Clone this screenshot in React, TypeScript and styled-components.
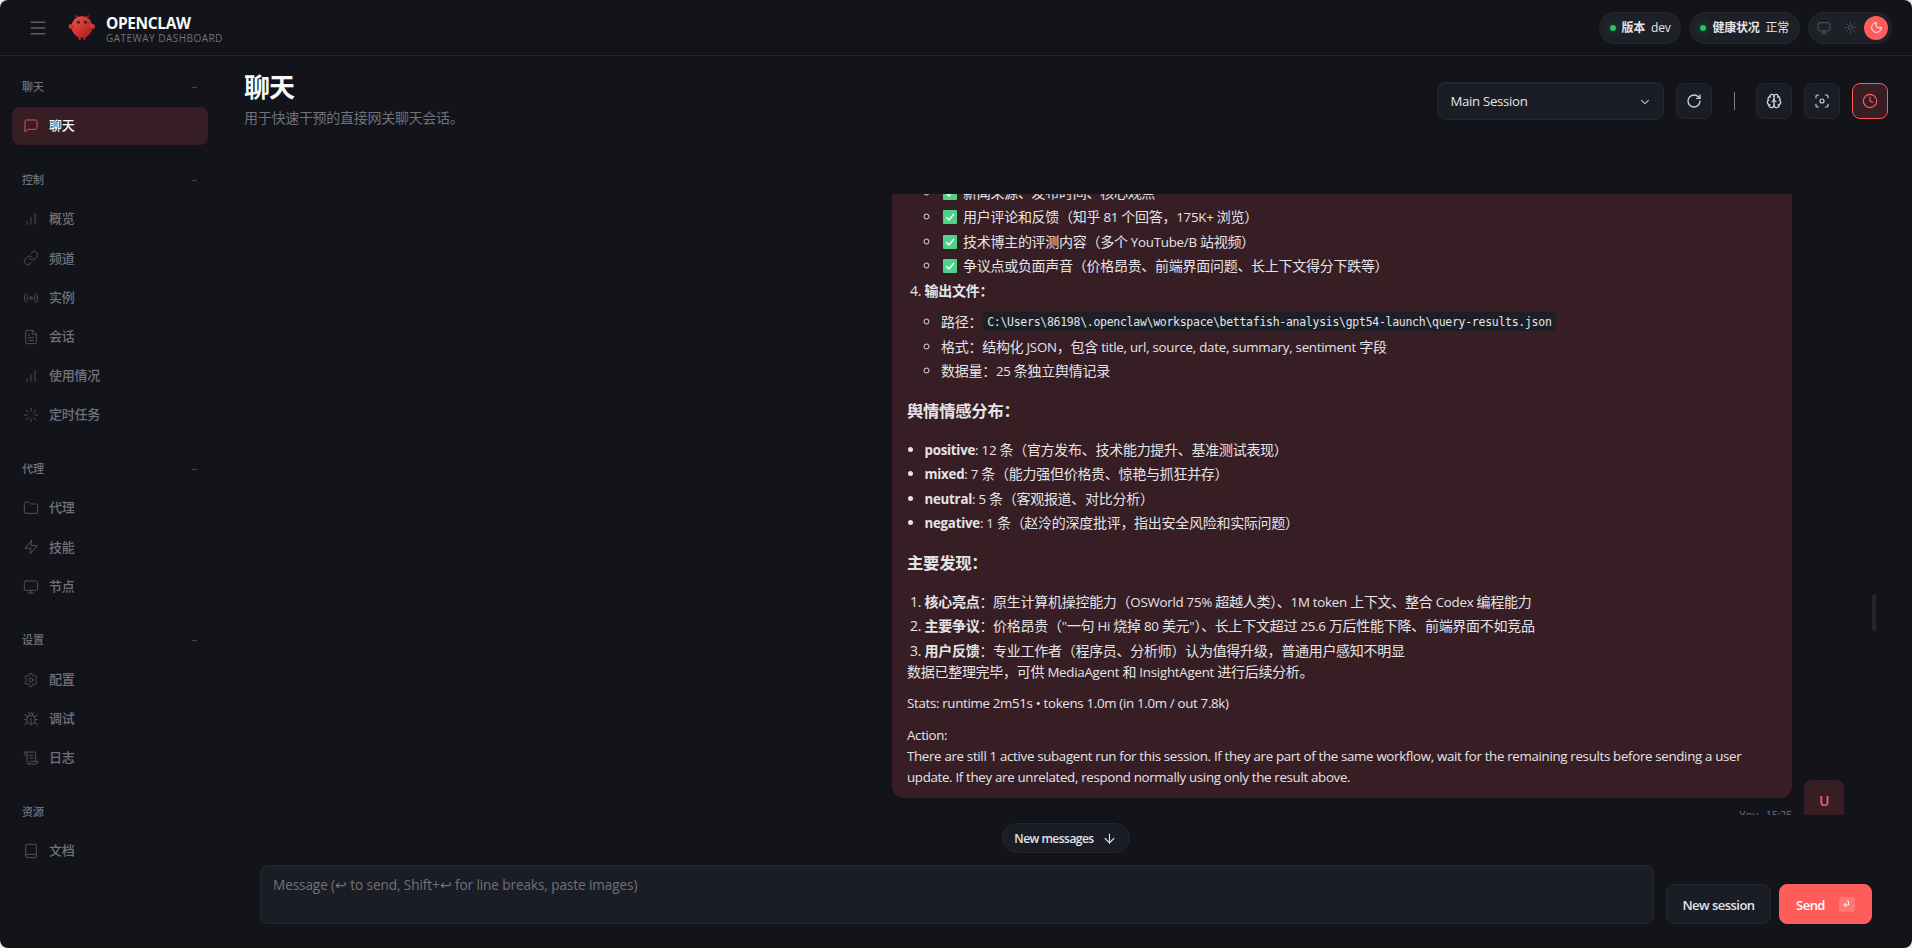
import React, { Fragment } from "react";
import styled, { createGlobalStyle, css } from "styled-components";
import {
  ArrowDown, Book, Brain, Bug, ChevronDown, Clock, FileText, Focus, Folder, Link,
  Loader, Menu, Monitor, Moon, Radio, RotateCw, ScrollText, Settings, Sun,
} from "lucide-react";

const Global = createGlobalStyle`
  * { box-sizing: border-box; }
  html, body { margin: 0; padding: 0; background: #e9eaec; }
  body {
    font: 400 14px/1.5 "Open Sans", "Noto Sans CJK SC", sans-serif;
    letter-spacing: -0.02em;
    color: #e4e4e7;
    overflow: hidden;
  }
  button { font: inherit; letter-spacing: inherit; color: inherit; padding: 0; margin: 0; }
`;

const Shell = styled.div`
  height: 948px;
  display: grid;
  grid-template: 56px 1fr / 220px 1fr;
  background: #12141a;
  border-radius: 8px;
  overflow: hidden;
`;

const Topbar = styled.header`
  grid-column: 1 / -1;
  display: flex;
  align-items: center;
  justify-content: space-between;
  padding: 0 20px;
  border-bottom: 1px solid #27272a;
`;
const Cluster = styled.div<{ $gap: number }>`
  display: flex;
  align-items: center;
  gap: ${(p) => p.$gap}px;
`;
const MenuButton = styled.button`
  width: 36px;
  height: 36px;
  display: grid;
  place-items: center;
  border: 0;
  background: none;
  color: #5f5f68;
`;
const Brand = styled.div`
  display: flex;
  flex-direction: column;
  gap: 1px;
  padding-top: 2px;
`;
const BrandName = styled.span`
  font-size: 15.5px;
  line-height: 17px;
  font-weight: 700;
  letter-spacing: -0.38px;
  color: #fafafa;
`;
const BrandSub = styled.span`
  font-size: 10px;
  line-height: 10px;
  font-weight: 500;
  letter-spacing: 0.47px;
  color: #71717a;
`;
const Pill = styled.div`
  height: 32px;
  display: flex;
  align-items: center;
  gap: 6px;
  padding: 0 10px;
  border: 1px solid #27272a;
  border-radius: 16px;
  background: #1e2028;
  font-size: 12px;
  letter-spacing: -0.24px;
`;
const Dot = styled.i`
  width: 6px;
  height: 6px;
  border-radius: 50%;
  background: #22c55e;
  box-shadow: 0 0 8px rgba(34, 197, 94, 0.5);
`;
const ThemeToggle = styled(Pill)`
  padding: 0 3px;
  gap: 2px;
`;
const ThemeOption = styled.span<{ $active?: boolean }>`
  width: 24px;
  height: 24px;
  display: grid;
  place-items: center;
  border-radius: 50%;
  color: ${(p) => (p.$active ? "#fff" : "#55555e")};
  background: ${(p) => (p.$active ? "#ff5c5c" : "none")};
`;

const Sidebar = styled.nav`
  display: flex;
  flex-direction: column;
  gap: 18.9px;
  padding: 15px 12px;
`;
const Group = styled.section`
  display: flex;
  flex-direction: column;
  gap: 1.05px;
`;
const GroupLabel = styled.div`
  height: 32px;
  margin-bottom: 3px;
  padding: 0 10px;
  display: flex;
  align-items: center;
  justify-content: space-between;
  font-size: 11px;
  font-weight: 500;
  color: #71717a;
  letter-spacing: 0;
`;
const Dash = styled.i`
  width: 5px;
  height: 1px;
  margin-right: 1px;
  background: #45464d;
`;
const Item = styled.a<{ $active?: boolean }>`
  height: 38.15px;
  display: flex;
  align-items: center;
  gap: 10px;
  padding: 0 11px;
  border-radius: 8px;
  font-size: 13px;
  font-weight: 500;
  color: ${(p) => (p.$active ? "#fafafa" : "#71717a")};
  background: ${(p) => (p.$active ? "#361e24" : "none")};
  svg {
    color: ${(p) => (p.$active ? "#ff5c5c" : "#71717a")};
    opacity: ${(p) => (p.$active ? 0.85 : 0.65)};
  }
`;

const Main = styled.main`
  display: flex;
  flex-direction: column;
  min-width: 0;
  padding: 0 24px;
`;
const PageHead = styled.div`
  height: 138px;
  display: flex;
  justify-content: space-between;
`;
const Title = styled.h1`
  margin: 14px 0 0;
  font-size: 26px;
  line-height: 34px;
  font-weight: 700;
  letter-spacing: -0.9px;
  color: #fafafa;
`;
const Subtitle = styled.p`
  margin: 3px 0 0;
  color: #71717a;
`;
const Controls = styled.div`
  height: 38px;
  margin-top: 26px;
  display: flex;
  align-items: center;
  gap: 12px;
`;
const raised = css`
  border: 1px solid #27272a;
  background: #1a1d25;
`;
const Select = styled.div`
  ${raised}
  width: 227px;
  height: 38px;
  display: flex;
  align-items: center;
  justify-content: space-between;
  padding: 1px 11px 0 13px;
  border-radius: 8px;
  box-shadow: inset 0 1px 0 #23252b;
  font-size: 13.2px;
  letter-spacing: -0.3px;
  font-weight: 500;
`;
const IconButton = styled.button<{ $active?: boolean }>`
  ${raised}
  width: 36px;
  height: 36px;
  display: grid;
  place-items: center;
  border-radius: 8px;
  color: #d0d0d4;
  ${(p) => p.$active && css`
    color: #ff5c5c;
    border-color: #ff5c5c;
    background: #361e24;
  `}
`;
const Divider = styled.i`
  width: 1px;
  height: 18px;
  margin: 0 9.5px 0 10px;
  background: #7b7b83;
`;

const Thread = styled.div`
  height: 621px;
  overflow: hidden;
  display: flex;
  flex-direction: column;
  justify-content: flex-end;
  position: relative;
  margin-right: 12px;
`;
const Message = styled.div`
  display: flex;
  justify-content: flex-end;
  align-items: flex-end;
  gap: 12px;
  padding-right: 32px;
  margin-bottom: -5px;
`;
const MessageBody = styled.div`
  width: 900px;
`;
const Bubble = styled.article`
  height: 632px;
  display: flex;
  flex-direction: column;
  justify-content: flex-end;
  padding: 0 15px 10.4px;
  border-radius: 12px;
  background: #361e24;
  line-height: 21px;
  p { margin: 10.5px 0 0; }
  ul, ol { margin: 0; padding-left: 17.5px; }
  > ul, > ol { margin: -1px 0 1px; }
  > ol + p { margin: -1px 0 1px; }
  h3 { margin: 16.4px 0; font-size: 16.38px; line-height: 24.6px; font-weight: 700; }
  li + li { margin-top: 3.5px; }
  ol ul { margin-top: 10.7px; padding-left: 16.5px; }
`;
const Latin = styled.span`
  font-size: 13.3px;
  line-height: 0;
  letter-spacing: -0.25px;
`;
const Lines = styled.p`
  font-size: 13.3px;
  letter-spacing: -0.318px;
`;
const Check = styled.svg`
  width: 14px;
  height: 14px;
  margin: 0 6px 0 2px;
  vertical-align: -2px;
`;
const Code = styled.code`
  display: inline-block;
  height: 19px;
  padding: 0 4.5px;
  margin: 1px 0 0 0.5px;
  border-radius: 4px;
  background: #1c1f26;
  font: 11.5px/20px "DejaVu Sans Mono", monospace;
  letter-spacing: -0.284px;
  vertical-align: top;
`;
const Meta = styled.footer`
  height: 22px;
  display: flex;
  justify-content: flex-end;
  gap: 7px;
  padding-top: 9px;
  line-height: 16px;
  font-size: 11px;
  letter-spacing: -0.35px;
  color: #71717a;
  b { font-weight: 500; font-size: 11.5px; }
`;
const Avatar = styled.div`
  width: 40px;
  height: 40px;
  display: grid;
  place-items: center;
  border-radius: 8px;
  background: #361e24;
  color: #ff5c5c;
  font-size: 14px;
  font-weight: 600;
`;
const ScrollThumb = styled.i`
  position: absolute;
  right: 0;
  top: 400px;
  width: 4px;
  height: 37px;
  border-radius: 4px 0 0 4px;
  background: #27272a;
`;

const JumpRow = styled.div`
  height: 50px;
  display: flex;
  justify-content: center;
  align-items: flex-start;
  padding: 8px 0 0;
`;
const JumpButton = styled.button`
  ${raised}
  width: 128px;
  height: 30px;
  display: flex;
  align-items: center;
  justify-content: center;
  gap: 8px;
  padding: 1px 1px 0 0;
  border-radius: 15px;
  font-size: 12px;
  font-weight: 600;
  letter-spacing: -0.52px;
`;
const Composer = styled.form`
  display: flex;
  align-items: flex-end;
  padding: 0 16px;
`;
const Input = styled.div`
  ${raised}
  flex: 1;
  height: 59px;
  margin-right: 12px;
  padding: 8px 12px;
  border-radius: 8px;
  box-shadow: inset 0 1px 0 #23252b;
  color: #71717a;
  font-size: 13.6px;
  line-height: 21px;
  letter-spacing: -0.1px;
`;
const Action = styled.button<{ $primary?: boolean }>`
  ${raised}
  width: 105px;
  height: 40px;
  display: flex;
  align-items: center;
  justify-content: center;
  gap: 14px;
  padding-top: 3px;
  border-radius: 8px;
  font-size: 13px;
  font-weight: 600;
  letter-spacing: -0.52px;
  ${(p) => p.$primary && css`
    width: 93px;
    margin-left: 8px;
    border-color: #ff5c5c;
    background: #ff5c5c;
    color: #fff;
  `}
`;
const Key = styled.kbd`
  width: 16px;
  height: 15px;
  margin-bottom: 3px;
  display: grid;
  place-items: center;
  border-radius: 3px;
  background: rgba(255, 255, 255, 0.17);
`;

/* Latin runs inside Chinese copy use a slightly smaller face. */
const Mixed = ({ children }: { children: string }) => (
  <>
    {children.split(/([\x20-\x7e•]+)/).map((run, i) =>
      i % 2 ? <Latin key={i}>{run}</Latin> : <Fragment key={i}>{run}</Fragment>
    )}
  </>
);

const Logo = () => (
  <svg width="28" height="28" viewBox="0 0 120 120">
    <defs>
      <linearGradient id="claw" x1="0" y1="0" x2="1" y2="1">
        <stop offset="0" stopColor="#ff4d4d" />
        <stop offset="1" stopColor="#991b1b" />
      </linearGradient>
    </defs>
    <path fill="url(#claw)" d="M60 10C30 10 15 35 15 55s15 40 30 45v10h10v-10s5 2 10 0v10h10v-10c15-5 30-25 30-45S90 10 60 10Z" />
    <path fill="url(#claw)" d="M20 45C5 40 0 50 5 60s15 5 20-5 0-10-5-10Z" />
    <path fill="url(#claw)" d="M100 45c15-5 20 5 15 15s-15 5-20-5 0-10 5-10Z" />
    <path d="M45 15Q35 5 30 8M75 15Q85 5 90 8" stroke="#ff4d4d" strokeWidth="3" strokeLinecap="round" fill="none" />
    <circle cx="45" cy="35" r="6" fill="#050810" />
    <circle cx="75" cy="35" r="6" fill="#050810" />
    <circle cx="46" cy="34" r="2.5" fill="#00e5cc" />
    <circle cx="76" cy="34" r="2.5" fill="#00e5cc" />
  </svg>
);

type GlyphProps = { size?: number; strokeWidth?: number };
const glyph = (d: string) => ({ size = 16, strokeWidth = 1.5 }: GlyphProps) => (
  <svg width={size} height={size} viewBox="0 0 24 24" fill="none" stroke="currentColor"
    strokeWidth={strokeWidth} strokeLinecap="round" strokeLinejoin="round">
    <path d={d} />
  </svg>
);
const ChatIcon = glyph("M21 15a2 2 0 0 1-2 2H7l-4 4V5a2 2 0 0 1 2-2h14a2 2 0 0 1 2 2z");
const BarsIcon = glyph("M12 20V10M18 20V4M6 20v-4");
const BoltIcon = glyph("M13 2 3 14h9l-1 8 10-12h-9l1-8z");

const CheckMark = () => (
  <Check viewBox="0 0 14 14">
    <rect width="14" height="14" rx="1" fill="#4fd18b" />
    <path d="M3.2 7.3 6 10l5-6" fill="none" stroke="#fff" strokeWidth="1.4" />
  </Check>
);

const ReturnArrow = ({ size, width }: { size: number; width: number }) => (
  <svg width={size} height={size} viewBox="0 0 12 12" fill="none" stroke="currentColor" strokeWidth={width}>
    <path d="M6.5 1.5h2.2v5.2H3M5.2 4 2.5 6.7l2.7 2.7" />
  </svg>
);

const groups = [
  { label: "聊天", items: [["聊天", ChatIcon]] },
  {
    label: "控制",
    items: [
      ["概览", BarsIcon], ["频道", Link], ["实例", Radio], ["会话", FileText],
      ["使用情况", BarsIcon], ["定时任务", Loader],
    ],
  },
  { label: "代理", items: [["代理", Folder], ["技能", BoltIcon], ["节点", Monitor]] },
  { label: "设置", items: [["配置", Settings], ["调试", Bug], ["日志", ScrollText]] },
  { label: "资源", fixed: true, items: [["文档", Book]] },
] as { label: string; fixed?: boolean; items: [string, React.ElementType][] }[];

const checks = [
  "新闻来源、发布时间、核心观点",
  "用户评论和反馈（知乎 81 个回答，175K+ 浏览）",
  "技术博主的评测内容（多个 YouTube/B 站视频）",
  "争议点或负面声音（价格昂贵、前端界面问题、长上下文得分下跌等）",
];
const sentiments = [
  ["positive", ": 12 条（官方发布、技术能力提升、基准测试表现）"],
  ["mixed", ": 7 条（能力强但价格贵、惊艳与抓狂并存）"],
  ["neutral", ": 5 条（客观报道、对比分析）"],
  ["negative", ": 1 条（赵泠的深度批评，指出安全风险和实际问题）"],
];
const findings = [
  ["核心亮点", "：原生计算机操控能力（OSWorld 75% 超越人类）、1M token 上下文、整合 Codex 编程能力"],
  ["主要争议", "：价格昂贵（\"一句 Hi 烧掉 80 美元\"）、长上下文超过 25.6 万后性能下降、前端界面不如竞品"],
  ["用户反馈", "：专业工作者（程序员、分析师）认为值得升级，普通用户感知不明显"],
];

export default function App() {
  return (
    <Shell>
      <Global />
      <Topbar>
        <Cluster $gap={12}>
          <MenuButton><Menu size={20} strokeWidth={1.8} /></MenuButton>
          <Cluster $gap={10}>
            <Logo />
            <Brand>
              <BrandName>OPENCLAW</BrandName>
              <BrandSub>GATEWAY DASHBOARD</BrandSub>
            </Brand>
          </Cluster>
        </Cluster>
        <Cluster $gap={8}>
          <Pill><Dot /><b>版本</b><span>dev</span></Pill>
          <Pill><Dot /><b>健康状况</b><span>正常</span></Pill>
          <ThemeToggle>
            <ThemeOption><Monitor size={14} strokeWidth={1.7} /></ThemeOption>
            <ThemeOption><Sun size={13} strokeWidth={1.7} /></ThemeOption>
            <ThemeOption $active><Moon size={13} strokeWidth={1.8} /></ThemeOption>
          </ThemeToggle>
        </Cluster>
      </Topbar>

      <Sidebar>
        {groups.map((g) => (
          <Group key={g.label}>
            <GroupLabel>{g.label}{!g.fixed && <Dash />}</GroupLabel>
            {g.items.map(([name, Icon]) => (
              <Item key={name} $active={name === "聊天"}>
                <Icon size={16} strokeWidth={1.5} />
                {name}
              </Item>
            ))}
          </Group>
        ))}
      </Sidebar>

      <Main>
        <PageHead>
          <div>
            <Title>聊天</Title>
            <Subtitle>用于快速干预的直接网关聊天会话。</Subtitle>
          </div>
          <Controls>
            <Select>Main Session<ChevronDown size={14} color="#a1a1aa" /></Select>
            <IconButton><RotateCw size={16} /></IconButton>
            <Divider />
            <IconButton><Brain size={16} /></IconButton>
            <IconButton><Focus size={16} strokeWidth={1.8} /></IconButton>
            <IconButton $active><Clock size={16} strokeWidth={1.7} /></IconButton>
          </Controls>
        </PageHead>

        <Thread>
          <Message>
            <MessageBody>
              <Bubble>
                <ol start={4}>
                  <ul style={{ marginTop: 0 }}>
                    {checks.map((c) => <li key={c}><CheckMark /><Mixed>{c}</Mixed></li>)}
                  </ul>
                  <li style={{ marginTop: 3.5 }}>
                    <b>输出文件：</b>
                    <ul>
                      <li>路径：<Code>C:\Users\86198\.openclaw\workspace\bettafish-analysis\gpt54-launch\query-results.json</Code></li>
                      <li><Mixed>格式：结构化 JSON，包含 title, url, source, date, summary, sentiment 字段</Mixed></li>
                      <li><Mixed>数据量：25 条独立舆情记录</Mixed></li>
                    </ul>
                  </li>
                </ol>
                <h3>舆情情感分布：</h3>
                <ul>
                  {sentiments.map(([k, v]) => <li key={k}><b><Latin>{k}</Latin></b><Mixed>{v}</Mixed></li>)}
                </ul>
                <h3>主要发现：</h3>
                <ol>
                  {findings.map(([k, v]) => <li key={k}><b>{k}</b><Mixed>{v}</Mixed></li>)}
                </ol>
                <p><Mixed>数据已整理完毕，可供 MediaAgent 和 InsightAgent 进行后续分析。</Mixed></p>
                <Lines>Stats: runtime 2m51s • tokens 1.0m (in 1.0m / out 7.8k)</Lines>
                <Lines>
                  Action:<br />
                  There are still 1 active subagent run for this session. If they are part of the same workflow, wait for the remaining results before sending a user<br />
                  update. If they are unrelated, respond normally using only the result above.
                </Lines>
              </Bubble>
              <Meta><b>You</b><span>15:25</span></Meta>
            </MessageBody>
            <Avatar>U</Avatar>
          </Message>
          <ScrollThumb />
        </Thread>

        <JumpRow>
          <JumpButton type="button">New messages<ArrowDown size={15} strokeWidth={1.7} /></JumpButton>
        </JumpRow>
        <Composer>
          <Input>Message (↩ to send, Shift+↩ for line breaks, paste images)</Input>
          <Action type="button">New session</Action>
          <Action type="button" $primary>Send<Key><ReturnArrow size={9} width={1.3} /></Key></Action>
        </Composer>
      </Main>
    </Shell>
  );
}
